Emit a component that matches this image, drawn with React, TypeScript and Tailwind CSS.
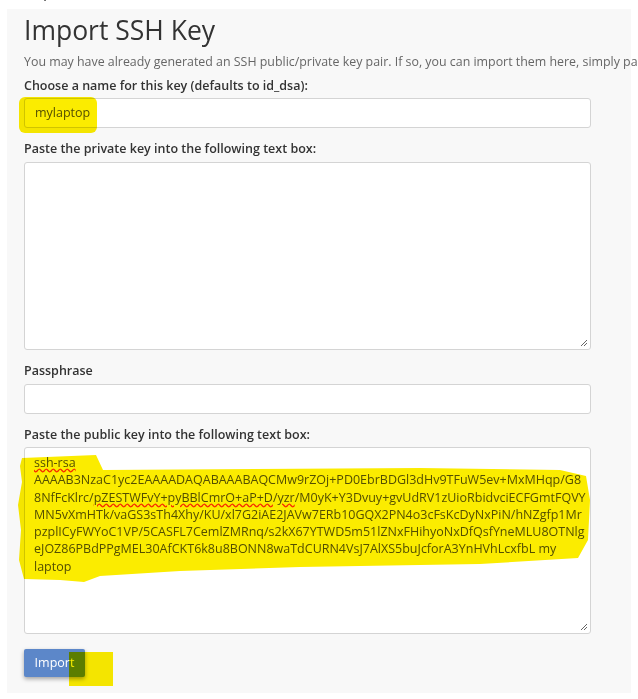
const keyLines: React.ReactNode[] = [
  "AAAAB3NzaC1yc2EAAAADAQABAAABAQCMw9rZOj+PD0EbrBDGl3dHv9TFuW5ev+MxMHqp/G8",
  <>
    8NfFcKlrc/
    <span className="underline decoration-wavy decoration-red-500">pZESTWFvY+pyBBlCmrO+aP+D</span>/
    <span className="underline decoration-wavy decoration-red-500">yzr</span>
    /M0yK+Y3Dvuy+gvUdRV1zUioRbidvciECFGmtFQVY
  </>,
  "MN5vXmHTk/vaGS3sTh4Xhy/KU/xl7G2iAE2JAVw7ERb10GQX2PN4o3cFsKcDyNxPiN/hNZgfp1Mr",
  "pzplICyFWYoC1VP/5CASFL7CemlZMRnq/s2kX67YTWD5m51lZNxFHihyoNxDfQsfYneMLU8OTNlg",
  "eJOZ86PBdPPgMEL30AfCKT6k8u8BONN8waTdCURN4VsJ7AlXS5buJcforA3YnHVhLcxfbL my",
  "laptop",
];

const Grip = () => (
  <svg className="absolute right-[2px] bottom-[2px]" width="8" height="8" viewBox="0 0 8 8">
    <path d="M7 1 L1 7 M7 4 L4 7" stroke="#666" strokeWidth="1" />
  </svg>
);

const Label = ({ children, className = "" }: { children: React.ReactNode; className?: string }) => (
  <label className={`block text-[12.5px] leading-[18px] font-semibold text-[#333] ${className}`}>{children}</label>
);

export default function App() {
  return (
    <div className="min-h-screen overflow-hidden bg-white font-['Open_Sans',sans-serif]">
      {/* cut-off caption above the panel */}
      <div className="h-[9px] overflow-hidden pl-[2px]">
        <p className="-mt-[17px] text-[16px] leading-4 text-[#333]">Example:</p>
      </div>

      <div className="relative ml-[7px] w-[624px] bg-[#f8f8f8] px-[17px] pt-[3px] pb-[16px]">
        <h1 className="text-[26.5px] leading-[36px] text-[#333] whitespace-nowrap">Import SSH Key</h1>
        <p className="mt-[5px] text-[12.4px] leading-[18px] text-[#666] whitespace-nowrap">
          You may have already generated an SSH public/private key pair. If so, you can import them here, simply paste them into the boxes below.
        </p>

        <Label className="mt-[6px] mb-[3px]">Choose a name for this key (defaults to id_dsa):</Label>
        <div className="w-[567px] h-[30px] bg-white border border-[#d4d4d4] rounded-[3px] px-[10px] flex items-center text-[12.5px] text-[#555]">
          mylaptop
        </div>

        <Label className="mt-[12px] mb-[4px]">Paste the private key into the following text box:</Label>
        <div className="relative w-[567px] h-[188px] bg-white border border-[#d4d4d4] rounded-[3px]">
          <Grip />
        </div>

        <Label className="mt-[12px] mb-[4px]">Passphrase</Label>
        <div className="w-[567px] h-[30px] bg-white border border-[#d4d4d4] rounded-[3px]" />

        <Label className="mt-[12px] mb-[3px]">Paste the public key into the following text box:</Label>
        <div className="relative w-[567px] h-[187px] bg-white border border-[#d4d4d4] rounded-[3px] px-[9px] py-[6px] text-[12.5px] leading-[17.3px] text-[#555]">
          <div>
            <span className="underline decoration-wavy decoration-red-500">ssh-rsa</span>
          </div>
          {keyLines.map((l, i) => (
            <div key={i} className="whitespace-nowrap">{l}</div>
          ))}
          <Grip />
        </div>

        <button className="mt-[15px] h-[28px] w-[61px] rounded-[2px] bg-[#5c87c9] text-[12.5px] text-white shadow-[0_2px_4px_rgba(0,0,0,0.35)]">
          Import
        </button>

        {/* highlighter marks */}
        <div className="absolute left-[12px] top-[88px] w-[78px] h-[36px] rounded-[6px] bg-[#fbec00] mix-blend-multiply" />
        <svg className="absolute left-0 top-0 pointer-events-none mix-blend-multiply" width="624" height="684" viewBox="7 9 624 684">
          <path
            d="M22 458 L96 455 L103 470 L420 468 L560 470 L586 476 L590 500 L588 540 L578 558 L480 564 L300 567 L180 571 L100 576 L84 582 L60 580 L24 579 L19 560 L21 530 L18 505 L22 482 L20 466 Z"
            fill="#fbec00"
          />
          <rect x="69" y="652" width="44" height="34" fill="#fbec00" />
        </svg>
      </div>
    </div>
  );
}
